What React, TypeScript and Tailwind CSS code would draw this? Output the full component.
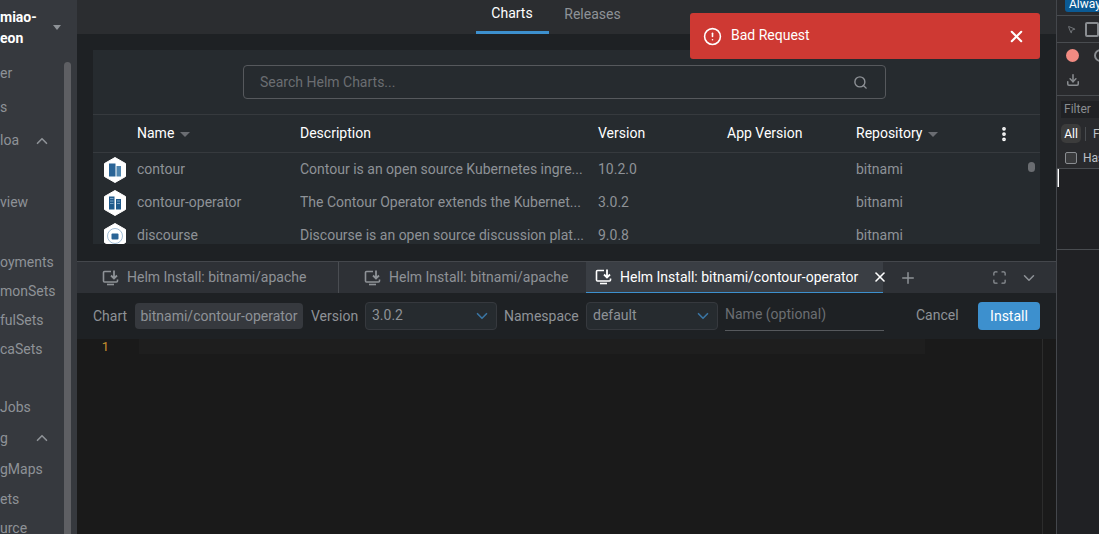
import React from "react";
import { ChevronUp, ChevronDown, Search, X, Plus, Maximize, AlertCircle, EllipsisVertical, MousePointer2, Download } from "lucide-react";

const font = { fontFamily: "Roboto, 'Liberation Sans', sans-serif" };

function InstallIcon({ active }: { active?: boolean }) {
  const c = active ? "#ffffff" : "#8e9297";
  return (
    <svg width="18" height="18" viewBox="0 0 18 18" fill="none" className="shrink-0">
      <path d="M9 2.5H2.5a1 1 0 0 0-1 1V12a1 1 0 0 0 1 1h12a1 1 0 0 0 1-1v-1.5" stroke={c} strokeWidth="1.6" />
      <path d="M12 1.5v7.5M9 6.5l3 3 3-3" stroke={c} strokeWidth="1.8" />
      <path d="M5 15.5h7" stroke={c} strokeWidth="1.6" />
    </svg>
  );
}

function Hex({ kind }: { kind: number }) {
  return (
    <svg width="24" height="26" viewBox="0 0 24 26" className="shrink-0">
      <path d="M12 .5 22.5 6.5v13L12 25.5 1.5 19.5v-13z" fill="#fff" stroke="#fff" strokeLinejoin="round" strokeWidth="1" />
      {kind === 0 && (
        <g fill="#2a6496">
          <rect x="6" y="6.5" width="6.5" height="13" />
          <rect x="13.5" y="9" width="4.5" height="10.5" fill="#4f86b0" />
        </g>
      )}
      {kind === 1 && (
        <g fill="#1f5a8c">
          <rect x="6" y="6.5" width="5.5" height="13" />
          <rect x="13" y="9" width="5" height="10.5" />
          <path d="M7 8.5h3.5M7 11h3.5M7 13.5h3.5M14 11h3M14 13.5h3" stroke="#8fb4d2" strokeWidth=".8" />
        </g>
      )}
      {kind === 2 && (
        <g>
          <circle cx="12" cy="13" r="7.5" fill="none" stroke="#9fbdd6" strokeWidth="1" />
          <rect x="8.5" y="10.5" width="7" height="6" rx="1" fill="#2a6496" />
        </g>
      )}
    </svg>
  );
}

function Caret() {
  return <span className="inline-block ml-[6px] w-0 h-0 border-x-[5px] border-x-transparent border-t-[5px] border-t-[#6a6d72] translate-y-[1px]" />;
}

const rows = [
  ["contour", "Contour is an open source Kubernetes ingre...", "10.2.0", 0],
  ["contour-operator", "The Contour Operator extends the Kubernet...", "3.0.2", 1],
  ["discourse", "Discourse is an open source discussion plat...", "9.0.8", 2],
] as const;

function Row({ h, text, chev }: { h: string; text: string; chev?: boolean }) {
  return (
    <div className={`${h} flex items-center justify-between shrink-0`}>
      <span className="whitespace-nowrap">{text}</span>
      {chev && <ChevronUp size={18} strokeWidth={2.2} className="mr-[26px] text-[#8e9297]" />}
    </div>
  );
}

function Sidebar() {
  return (
    <div className="w-[77px] shrink-0 bg-[#36393e] flex overflow-hidden text-[14px] text-[#8e9297]">
      <div className="w-[64px] shrink-0 flex flex-col">
        <div className="h-[55px] shrink-0 pt-[7px] text-white font-bold leading-[21px] relative w-[77px]">
          <div>miao-</div>
          <div>eon</div>
          <span className="absolute left-[53px] top-[25px] w-0 h-0 border-x-[4px] border-x-transparent border-t-[5px] border-t-[#8e9297]" />
        </div>
        <div className="w-[77px]">
          <Row h="h-[36px]" text="er" />
          <Row h="h-[33px]" text="s" />
          <Row h="h-[33px]" text="loa" chev />
          <Row h="h-[29px]" text="" />
          <Row h="h-[33px]" text="view" />
          <Row h="h-[29px]" text="" />
          <Row h="h-[29px]" text="oyments" />
          <Row h="h-[29px]" text="monSets" />
          <Row h="h-[29px]" text="fulSets" />
          <Row h="h-[29px]" text="caSets" />
          <Row h="h-[29px]" text="" />
          <Row h="h-[29px]" text="Jobs" />
          <Row h="h-[32px]" text="g" chev />
          <Row h="h-[31px]" text="gMaps" />
          <Row h="h-[29px]" text="ets" />
          <Row h="h-[29px]" text="urce" />
        </div>
      </div>
      <div className="w-[13px] shrink-0 pt-[62px] flex flex-col">
        <div className="w-[7px] flex-1 rounded-t-[4px] bg-[#5e5f63]" />
      </div>
    </div>
  );
}

function Tab({ w, label, border }: { w: string; label: string; border?: boolean }) {
  return (
    <div className={`${w} shrink-0 h-full flex items-center pl-[25px] gap-[7px] text-[#8e9297] ${border ? "border-r border-[#4a4d52]" : ""}`}>
      <InstallIcon />
      <span className="whitespace-nowrap">{label}</span>
    </div>
  );
}

function ChartsPanel() {
  return (
    <div className="h-[194px] mx-[16px] mt-[16px] shrink-0 bg-[#262b2f] overflow-hidden">
      <div className="h-[65px] border-b border-[#363a3e] flex justify-center pt-[15px] pr-[4px]">
        <div className="w-[643px] h-[34px] border border-[#56595d] rounded-[4px] flex items-center justify-between pl-[16px] pr-[17px] text-[#6b6e72]">
          <span>Search Helm Charts...</span>
          <Search size={15} strokeWidth={2.2} className="text-[#8e9297]" />
        </div>
      </div>
      <div className="h-[38px] border-b border-[#363a3e] flex items-center text-white relative">
        <div className="w-[207px] pl-[44px] shrink-0 flex items-center">Name<Caret /></div>
        <div className="w-[298px] shrink-0">Description</div>
        <div className="w-[129px] shrink-0">Version</div>
        <div className="w-[129px] shrink-0">App Version</div>
        <div className="w-[143px] shrink-0 flex items-center">Repository<Caret /></div>
        <EllipsisVertical size={18} strokeWidth={3} className="shrink-0 -ml-[4px]" />
      </div>
      {rows.map(([name, desc, ver, kind], i) => (
        <div key={name} className="h-[33px] flex items-center text-[#8e9297] relative">
          <div className="w-[44px] pl-[10px] shrink-0"><Hex kind={kind} /></div>
          <div className="w-[163px] shrink-0 whitespace-nowrap">{name}</div>
          <div className="w-[298px] shrink-0 whitespace-nowrap overflow-hidden">{desc}</div>
          <div className="w-[258px] shrink-0">{ver}</div>
          <div className="shrink-0">bitnami</div>
          {i === 0 && <span className="absolute left-[935px] top-[9px] w-[7px] h-[10px] rounded-full bg-[#6a6d71]" />}
        </div>
      ))}
    </div>
  );
}

function Select({ value }: { value: string }) {
  return (
    <div className="w-[132px] h-[28px] shrink-0 rounded-[4px] border border-[#36393e] bg-[#262b2f] flex items-center justify-between pl-[6px] pr-[5px] text-[#8e9297]">
      <span className="-translate-y-[1px]">{value}</span>
      <ChevronDown size={18} strokeWidth={2.2} className="text-[#3a75a3]" />
    </div>
  );
}

function Dock() {
  return (
    <div className="flex-1 flex flex-col min-h-0">
      <div className="h-[32px] shrink-0 bg-[#2e3136] border-t border-[#44474c] flex items-center">
        <Tab w="w-[262px]" label="Helm Install: bitnami/apache" border />
        <Tab w="w-[247px]" label="Helm Install: bitnami/apache" />
        <div className="w-[297px] shrink-0 h-full bg-[#3a3e44] border-b border-[#3d90ce] flex items-center pl-[9px] gap-[7px] text-white">
          <InstallIcon active />
          <span className="whitespace-nowrap">Helm Install: bitnami/contour-operator</span>
          <X size={16} strokeWidth={2.4} className="ml-[7px] shrink-0" />
        </div>
        <Plus size={18} strokeWidth={2} className="ml-[16px] text-[#8e9297] shrink-0" />
        <Maximize size={15} strokeWidth={2} className="ml-[75px] text-[#8e9297] shrink-0" />
        <ChevronDown size={18} strokeWidth={2} className="ml-[13px] text-[#8e9297] shrink-0" />
      </div>
      <div className="h-[46px] shrink-0 bg-[#1e2124] flex items-center pl-[16px] text-[#8e9297]">
        <span className="w-[42px] shrink-0">Chart</span>
        <span className="w-[168px] h-[26px] shrink-0 rounded-[4px] bg-[#36393e] flex items-center justify-center whitespace-nowrap">bitnami/contour-operator</span>
        <span className="ml-[8px] w-[54px] shrink-0">Version</span>
        <Select value="3.0.2" />
        <span className="ml-[7px] w-[82px] shrink-0">Namespace</span>
        <Select value="default" />
        <div className="ml-[7px] w-[159px] h-[29px] shrink-0 border-b border-[#56595d] text-[#6b6e72] flex items-center pb-[2px]">Name (optional)</div>
        <span className="ml-[32px] w-[62px] shrink-0 -translate-y-[1px]">Cancel</span>
        <div className="w-[62px] h-[28px] shrink-0 rounded-[4px] bg-[#3d90ce] text-white flex items-center justify-center">Install</div>
      </div>
      <div className="flex-1 bg-[#1a1a1a] flex">
        <div className="w-[62px] shrink-0 pr-[30px] text-right text-[#c6922e] text-[13px] leading-[15px]">1</div>
        <div className="w-[786px] h-[15px] shrink-0 bg-[#1e1e1e]" />
        <div className="ml-[117px] w-px bg-[#2c2c2c]" />
      </div>
    </div>
  );
}

function DevTools() {
  return (
    <div className="flex-1 min-w-0 bg-[#292a2d] border-l border-[#44474c] flex flex-col overflow-hidden text-[12px] text-[#bdc1c6]" style={{ fontFamily: "Roboto, sans-serif" }}>
      <div className="h-[16px] shrink-0 border-b border-[#494c50] pl-[8px] overflow-hidden">
        <div className="w-[60px] h-[12px] rounded-b-[3px] bg-[#0b5a94] text-white leading-[8px] pl-[4px] whitespace-nowrap">Always</div>
      </div>
      <div className="h-[27px] shrink-0 border-b border-[#494c50] flex items-center pl-[10px] gap-[9px] text-[#8a8d91]">
        <MousePointer2 size={15} />
        <span className="w-[14px] h-[15px] border-2 border-[#8a8d91] rounded-[2px] shrink-0" />
      </div>
      <div className="h-[53px] shrink-0 border-b border-[#494c50] pl-[9px] pt-[6px]">
        <div className="flex items-center gap-[15px]">
          <span className="w-[13px] h-[13px] rounded-full bg-[#f28b82] shrink-0" />
          <span className="w-[13px] h-[13px] rounded-full border-2 border-[#8a8d91] shrink-0" />
        </div>
        <Download size={14} strokeWidth={2.6} className="mt-[11px] text-[#8a8d91]" />
      </div>
      <div className="h-[73px] shrink-0 border-b border-[#494c50] pl-[4px] pt-[5px]">
        <div className="h-[17px] bg-[#202124] pl-[3px] leading-[17px] text-[#8a8d91] whitespace-nowrap">Filter</div>
        <div className="flex items-center mt-[6px]">
          <span className="w-[20px] h-[19px] rounded-[5px] bg-[#3c3c3c] text-white flex items-center justify-center shrink-0">All</span>
          <span className="w-px h-[14px] bg-[#494c50] ml-[4px] shrink-0" />
          <span className="ml-[7px]">F</span>
        </div>
        <div className="flex items-center mt-[6px] pl-[4px] gap-[6px] whitespace-nowrap">
          <span className="w-[12px] h-[12px] rounded-[2px] border border-[#8a8d91] bg-[#3a3b3d] shrink-0" />
          <span>Has</span>
        </div>
      </div>
      <div className="h-[81px] shrink-0 bg-[#202124] border-b border-[#494c50]">
        <div className="w-[2px] h-[18px] bg-white border-l border-[#8a8d91]" />
      </div>
      <div className="flex-1 bg-[#202124]" />
    </div>
  );
}

export default function App() {
  return (
    <div className="w-[1099px] h-[534px] flex overflow-hidden relative bg-[#1e2124] text-[14px]" style={font}>
      <Sidebar />
      <div className="w-[979px] shrink-0 flex flex-col">
        <div className="h-[34px] shrink-0 bg-[#2b2d30] flex justify-center pr-[37px]">
          <div className="h-full flex gap-[16px]">
            <div className="w-[73px] h-full border-b-[3px] border-[#3d90ce] text-white flex items-center justify-center pb-[5px]">Charts</div>
            <div className="w-[56px] h-full text-[#8e9297] flex items-center justify-center pb-[5px]">Releases</div>
          </div>
        </div>
        <ChartsPanel />
        <div className="h-[17px] shrink-0" />
        <Dock />
      </div>
      <DevTools />
      <div className="absolute left-[690px] top-[13px] w-[350px] h-[46px] rounded-[3px] bg-[#ce3933] text-white flex items-center pl-[13px] pr-[14px]">
        <AlertCircle size={19} strokeWidth={2} className="shrink-0" />
        <span className="ml-[9px] flex-1 -translate-y-[1px]">Bad Request</span>
        <X size={19} strokeWidth={2.6} className="shrink-0" />
      </div>
    </div>
  );
}
